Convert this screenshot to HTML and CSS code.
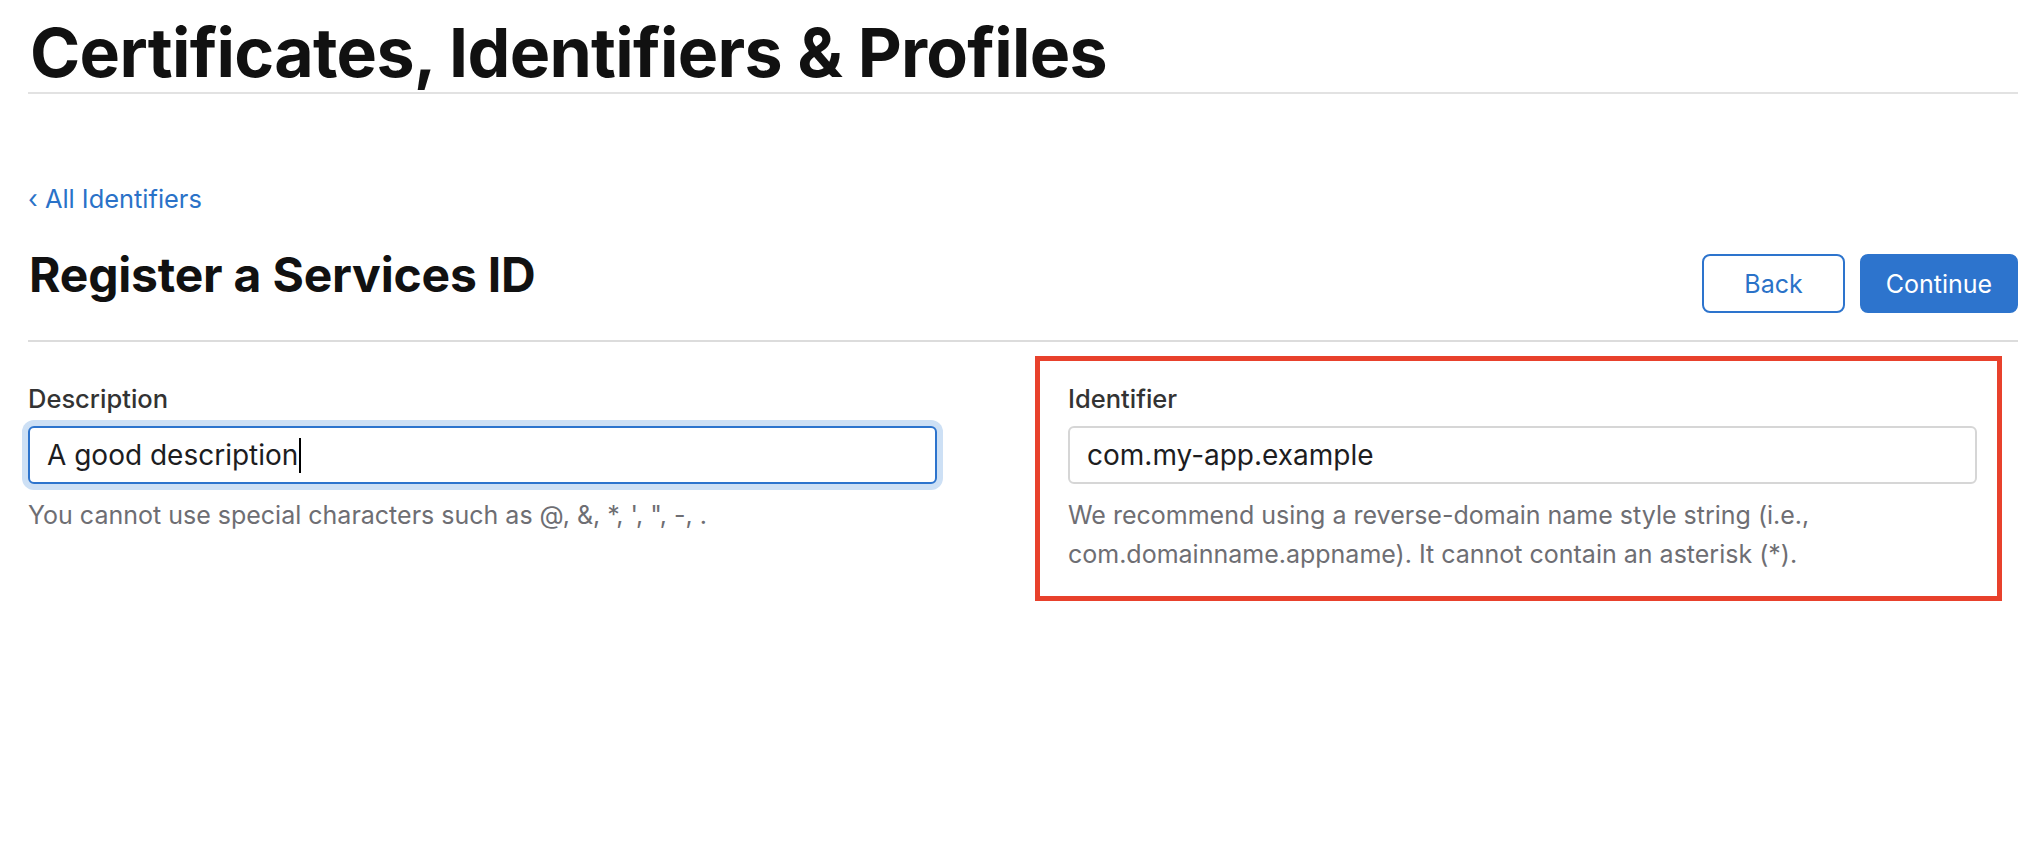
FILE: index.html
```html
<!DOCTYPE html>
<html lang="en">
<head>
<meta charset="utf-8">
<title>Register a Services ID</title>
<link rel="stylesheet" href="styles.css">
</head>
<body>
<div class="page">
  <header class="site-header">
    <h1 class="site-title">Certificates, Identifiers &amp; Profiles</h1>
  </header>

  <a class="back-link" href="#">‹ All Identifiers</a>

  <div class="page-head">
    <h2 class="page-title">Register a Services ID</h2>
    <div class="actions">
      <button class="btn btn-secondary" type="button">Back</button>
      <button class="btn btn-primary" type="button">Continue</button>
    </div>
  </div>

  <div class="form-row">
    <div class="field">
      <label class="field-label">Description</label>
      <div class="text-input is-focused"><span class="value">A good description</span><span class="caret"></span></div>
      <p class="field-hint">You cannot use special characters such as @, &amp;, *, ', ", -, .</p>
    </div>
    <div class="annotation">
      <div class="field">
        <label class="field-label">Identifier</label>
        <div class="text-input"><span class="value">com.my-app.example</span></div>
        <p class="field-hint">We recommend using a reverse-domain name style string (i.e.,<br>com.domainname.appname). It cannot contain an asterisk (*).</p>
      </div>
    </div>
  </div>
</div>
</body>
</html>
```

FILE: styles.css
```css
html, body {
  margin: 0;
  padding: 0;
  background: #ffffff;
}

body {
  font-family: Inter, "Noto Sans", "Liberation Sans", sans-serif;
  color: #1d1d1f;
}

.page {
  min-height: 858px;
  box-sizing: border-box;
  padding: 0 24px 0 28px;
}

.site-header {
  border-bottom: 2px solid #e2e2e2;
}

.site-title {
  margin: 0 0 0 2px;
  padding-top: 12px;
  font-size: 68px;
  line-height: 80px;
  font-weight: 700;
  color: #111111;
  letter-spacing: -0.7px;
}

.back-link {
  display: inline-block;
  margin-top: 87px;
  font-size: 25.4px;
  line-height: 36px;
  color: #2a72c8;
  text-decoration: none;
}

.page-head {
  display: flex;
  justify-content: space-between;
  align-items: flex-start;
  margin-top: 29px;
  padding-bottom: 27px;
  border-bottom: 2px solid #dcdcdc;
}

.page-title {
  margin: 0 0 0 1px;
  font-size: 48px;
  line-height: 58px;
  font-weight: 700;
  color: #111111;
  letter-spacing: -0.2px;
}

.actions {
  display: flex;
  gap: 15px;
  margin-top: 8px;
}

.btn {
  height: 59px;
  box-sizing: border-box;
  border-radius: 8px;
  font-family: Inter, "Noto Sans", "Liberation Sans", sans-serif;
  font-size: 25px;
  font-weight: 400;
  cursor: pointer;
}

.btn-secondary {
  width: 143px;
  background: #ffffff;
  color: #2a72c8;
  border: 2px solid #2d74cd;
}

.btn-primary {
  width: 158px;
  background: #2d74cd;
  color: #ffffff;
  border: 2px solid #2d74cd;
}

.form-row {
  display: grid;
  grid-template-columns: 909px 909px;
  column-gap: 131px;
  align-items: start;
  margin-top: 39px;
}

.field-label {
  display: block;
  font-size: 25.5px;
  line-height: 36px;
  font-weight: 500;
  color: #333333;
  margin-bottom: 9px;
}

.text-input {
  display: flex;
  align-items: center;
  height: 58px;
  box-sizing: border-box;
  padding: 0 17px;
  border: 2px solid #d6d6d6;
  border-radius: 6px;
  font-size: 28px;
  color: #1d1d1f;
  background: #ffffff;
}

.text-input.is-focused {
  border-color: #2d74cd;
  box-shadow: 0 0 0 6px #cde0f5;
}

.caret {
  display: inline-block;
  width: 2px;
  height: 35px;
  margin-left: 1px;
  background: #000000;
}

.field-hint {
  margin: 12px 0 0;
  font-size: 25px;
  line-height: 39px;
  color: #6e6e73;
}

.annotation {
  margin: -25px -25px -27px -33px;
  padding: 20px 20px 22px 28px;
  border: 5px solid #e8412c;
}
```
